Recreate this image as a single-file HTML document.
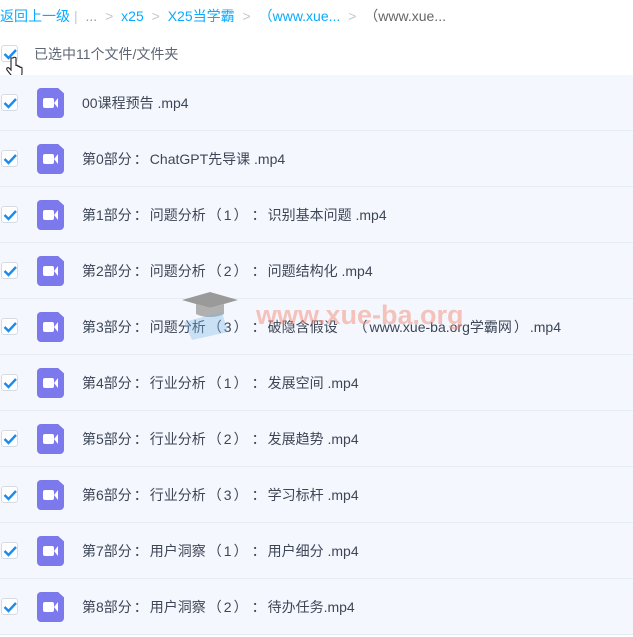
<!DOCTYPE html><html><head><meta charset="utf-8"><style>
body{margin:0;width:633px;height:637px;overflow:hidden;background:#fff;font-family:"Liberation Sans","Noto Sans CJK SC",sans-serif;}
.bc{position:absolute;top:6px;left:0;font-size:14px;color:#09aaff;white-space:nowrap;}
.bc span{margin-right:4px}
.g{color:#c3c8d0}
.sel{position:absolute;top:44px;left:34px;font-size:14px;color:#5e6573}
.cb{position:absolute;left:1px;width:17px;height:17px;border:1px solid #d4dbe5;border-radius:3px;background:#fff;box-sizing:border-box}
.cb svg{position:absolute;left:1px;top:2px}
.row{position:absolute;left:0;width:633px;height:55px;background:#f4f8fe;border-bottom:1px solid #e6ecf4}
.row .cb{top:19px}
.ic{position:absolute;left:37px;top:13px;width:27px;height:30px;background:#7c79ec;border-radius:4px;clip-path:polygon(0 0,78% 0,100% 18%,100% 100%,0 100%)}
.ic i{position:absolute;left:6px;top:10px;width:11px;height:10px;background:#fff;border-radius:2px}
.ic b{position:absolute;left:17px;top:10px;width:0;height:0;border-top:5px solid transparent;border-bottom:5px solid transparent;border-right:4px solid #fff}
.t{position:absolute;left:82px;top:18px;font-size:14px;color:#3e4656;white-space:nowrap}
.p{display:inline-block;width:18px;text-align:center}
.wm{position:absolute;left:256px;top:300px;font-size:27px;font-weight:bold;color:rgba(245,140,120,.5);font-family:"Liberation Sans",sans-serif}
.cap{position:absolute;left:182px;top:292px}
</style></head><body>
<div class="bc"><span>返回上一级</span><span class="g">|</span> <span style="color:#999">...</span> <span class="g">&gt;</span> <span>x25</span> <span class="g">&gt;</span> <span>X25当学霸</span> <span class="g">&gt;</span> <span>（www.xue...</span> <span class="g">&gt;</span> <span style="color:#666">（www.xue...</span></div>
<div class="cb" style="top:45px"><svg width="14" height="12"><path d="M1.5 6l4 4L13 2" stroke="#1a8cf0" stroke-width="2.4" fill="none"/></svg></div>
<svg style="position:absolute;left:6px;top:56px" width="18" height="24"><path d="M5 2v12l-2-2c-1-1-3 0-2 2l4 5c1 2 2 3 5 3h2c3 0 4-2 4-5v-5c0-1-2-1-2 0v-1c0-1-2-1-2 0v-1c0-1-2-1-2 0V2c0-1-3-1-3 0z" fill="#fff" stroke="#222" stroke-width="1.1"/></svg>
<div class="sel">已选中11个文件/文件夹</div>
<div id="rows"></div>
<script>
var n=["00课程预告 .mp4","第0部分：ChatGPT先导课 .mp4","第1部分：问题分析（1）：识别基本问题 .mp4","第2部分：问题分析（2）：问题结构化 .mp4","第3部分：问题分析（3）：破隐含假设 @（www.xue-ba.org学霸网）.mp4","第4部分：行业分析（1）：发展空间 .mp4","第5部分：行业分析（2）：发展趋势 .mp4","第6部分：行业分析（3）：学习标杆 .mp4","第7部分：用户洞察（1）：用户细分 .mp4","第8部分：用户洞察（2）：待办任务.mp4"];
var h="";n.forEach(function(s,i){s=s.replace(/([：（）])/g,'<span class="p">$1</span>').replace('@','<span style="display:inline-block;width:10px"></span>');h+='<div class="row" style="top:'+(75+i*56)+'px"><div class="cb"><svg width="14" height="12"><path d="M1.5 6l4 4L13 2" stroke="#1a8cf0" stroke-width="2.4" fill="none"/></svg></div><div class="ic"><i></i><b></b></div><div class="t">'+s+'</div></div>';});
document.getElementById("rows").innerHTML=h;
</script>
<svg class="cap" width="60" height="50"><path d="M0 8 L28 0 L56 8 L28 16Z" fill="#9a9a9a"/><path d="M14 12v10c8 4 20 4 28 0V12L28 16Z" fill="#b0b0b0"/><path d="M2 30 L40 20 L46 40 L10 48Z" fill="rgba(120,180,230,.35)"/></svg>
<div class="wm">www.xue-ba.org</div>
</body></html>
